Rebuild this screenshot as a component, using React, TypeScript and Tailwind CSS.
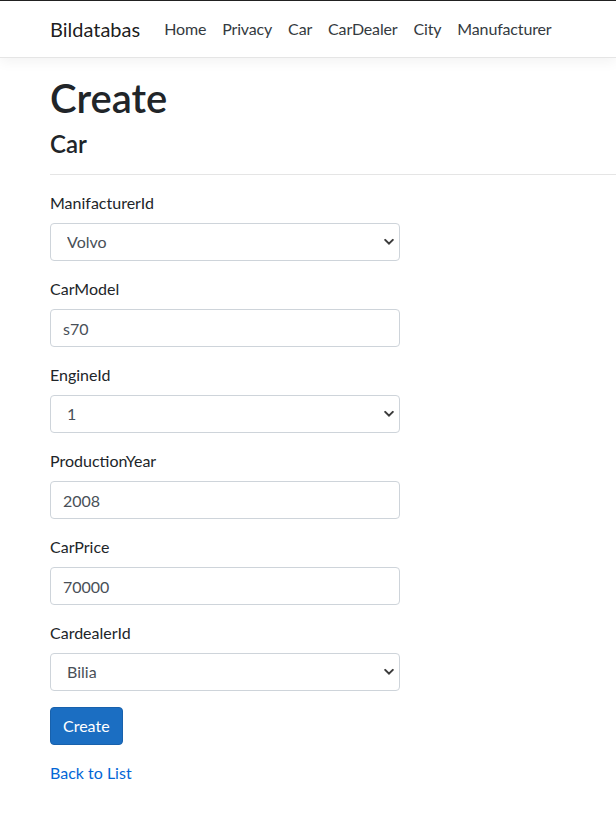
import React from "react";

const fields = [
	{ label: "ManifacturerId", value: "Volvo", select: true, options: ["Volvo", "Saab", "BMW"] },
	{ label: "CarModel", value: "s70" },
	{ label: "EngineId", value: "1", select: true, options: ["1", "2", "3"] },
	{ label: "ProductionYear", value: "2008" },
	{ label: "CarPrice", value: "70000" },
	{ label: "CardealerId", value: "Bilia", select: true, options: ["Bilia", "Hedin"] },
];

const Chevron: React.FC = () => (
	<svg
		className="pointer-events-none absolute right-[6px] top-1/2 -translate-y-1/2"
		width="10"
		height="7"
		viewBox="0 0 10 7"
		fill="none"
	>
		<path d="M1.2 1.4 5 5.2 8.8 1.4" stroke="#3b3b3b" strokeWidth="2" strokeLinecap="round" />
	</svg>
);

const App: React.FC = () => {
	const navLinks = ["Home", "Privacy", "Car", "CarDealer", "City", "Manufacturer"];

	return (
		<div className="min-h-screen bg-white text-[#212529] font-['Lato','Segoe_UI',sans-serif] overflow-hidden">
			<div className="h-px bg-[#222]" />
			<nav className="h-[57px] border-b border-[#e5e5e5] shadow-[0_4px_12px_rgba(0,0,0,0.05)] flex items-center pl-[50px]">
				<a href="#" className="text-[20px] text-black/90 mr-4 leading-[30px]">
					Bildatabas
				</a>
				<ul className="flex tracking-[-0.01em]">
					{navLinks.map((l) => (
						<li key={l}>
							<a href="#" className="block px-2 py-2 text-base text-[#343a40]">
								{l}
							</a>
						</li>
					))}
				</ul>
			</nav>

			<main className="pl-[50px] pt-4">
				<h1 className="text-[40px] font-semibold leading-[48px] mb-2">Create</h1>
				<h4 className="text-[24px] font-semibold leading-[28px]">Car</h4>
				<hr className="mt-4 mb-4 border-t border-black/10" />

				<form className="w-[350px]" onSubmit={(e) => e.preventDefault()}>
					{fields.map((f) => (
						<div key={f.label} className="mb-4">
							<label className="block text-base leading-6 mb-2">{f.label}</label>
							{f.select ? (
								<div className="relative">
									<select
										defaultValue={f.value}
										className="appearance-none block w-full h-[38px] border border-[#ced4da] rounded bg-white pl-4 pr-8 text-base text-[#495057] outline-none"
									>
										{f.options!.map((o) => (
											<option key={o}>{o}</option>
										))}
									</select>
									<Chevron />
								</div>
							) : (
								<input
									defaultValue={f.value}
									className="block w-full h-[38px] border border-[#ced4da] rounded bg-white px-3 text-base text-[#495057] outline-none"
								/>
							)}
						</div>
					))}
					<div className="mb-4">
						<button
							type="submit"
							className="h-[38px] px-3 rounded bg-[#1b6ec2] border border-[#1861ac] text-white text-base"
						>
							Create
						</button>
					</div>
				</form>

				<div className="leading-6">
					<a href="#" className="text-[#0366d6]">
						Back to List
					</a>
				</div>
			</main>
		</div>
	);
};

export default App;
